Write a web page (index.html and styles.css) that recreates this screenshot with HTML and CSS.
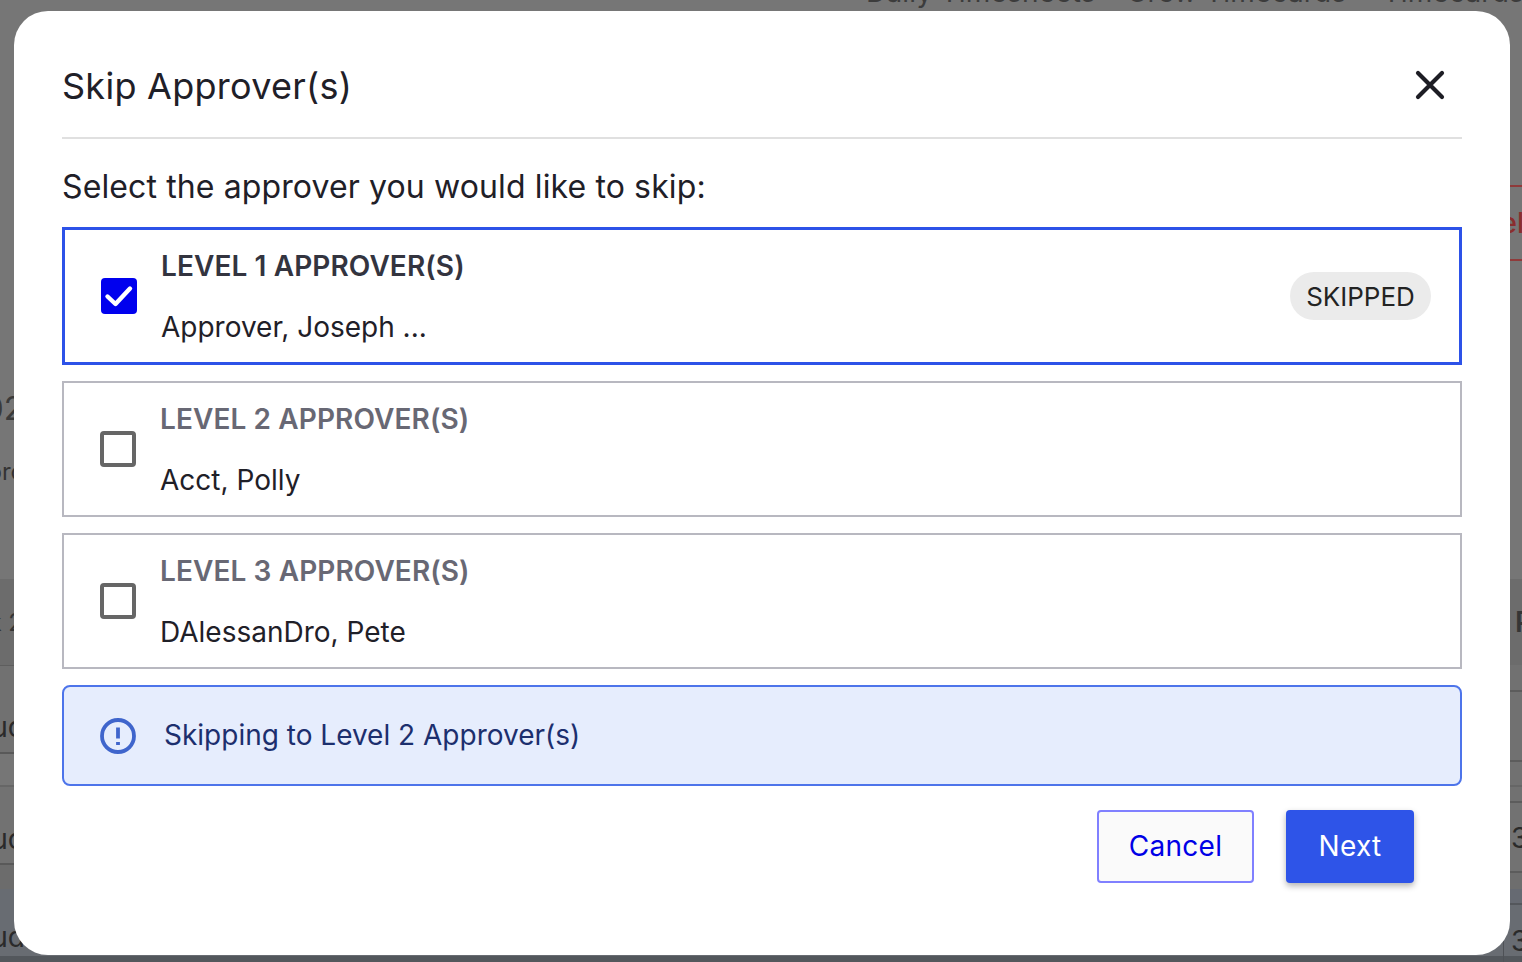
FILE: index.html
```html
<!DOCTYPE html>
<html lang="en">
<head>
<meta charset="utf-8">
<title>Skip Approver(s)</title>
<link rel="stylesheet" href="styles.css">
</head>
<body>
<div class="page">
  <div class="backdrop">
    <nav class="bg-nav"><span>Daily Timesheets</span><span>Crew Timecards</span><span class="bg-nav-last">Timecards</span></nav>
    <div class="bg-banner"><span class="bg-alert">Cancel</span></div>
    <div class="bg-hero"><span class="bg-num">202</span></div>
    <div class="bg-sub"><span>Approver</span></div>
    <div class="bg-head"><span class="bg-l">Week 2</span><span class="bg-r">Pay</span></div>
    <div class="bg-row bg-r1"><span class="bg-l">Studio</span></div>
    <div class="bg-row bg-r2"></div>
    <div class="bg-row bg-r3"><span class="bg-l">Studio</span></div>
    <div class="bg-row bg-r4"></div>
    <div class="bg-foot"><span class="bg-l">Studio</span></div>
  </div>

  <div class="bg-edge">
    <div class="edge-row edge-a"></div>
    <div class="edge-row edge-b"></div>
    <div class="edge-row edge-c"></div>
    <div class="edge-row edge-d"></div>
    <div class="edge-row edge-e">3</div>
    <div class="edge-row edge-f"></div>
    <div class="edge-row edge-g"></div>
    <div class="edge-row edge-h">3</div>
  </div>

  <section class="modal">
    <header class="modal-head">
      <h1 class="modal-title">Skip Approver(s)</h1>
      <svg class="close" viewBox="0 0 30 30" aria-label="Close"><path d="M3 3 L27 27 M27 3 L3 27"/></svg>
    </header>

    <p class="prompt">Select the approver you would like to skip:</p>

    <div class="levels">
      <div class="level level-active">
        <span class="check check-on">
          <svg viewBox="0 0 36 36"><path d="M6.5 18.5 L14.5 26 L29 10.5"/></svg>
        </span>
        <div class="level-text">
          <div class="level-title level-title-dark">LEVEL 1 APPROVER(S)</div>
          <div class="level-name">Approver, Joseph ...</div>
        </div>
        <span class="pill">SKIPPED</span>
      </div>

      <div class="level">
        <span class="check"></span>
        <div class="level-text">
          <div class="level-title">LEVEL 2 APPROVER(S)</div>
          <div class="level-name">Acct, Polly</div>
        </div>
      </div>

      <div class="level">
        <span class="check"></span>
        <div class="level-text">
          <div class="level-title">LEVEL 3 APPROVER(S)</div>
          <div class="level-name">DAlessanDro, Pete</div>
        </div>
      </div>

      <div class="info">
        <svg class="info-icon" viewBox="0 0 36 36"><circle cx="18" cy="18" r="16"/><path d="M18 9.5 V20.5"/><path d="M18 24 V27"/></svg>
        <span class="info-text">Skipping to Level 2 Approver(s)</span>
      </div>
    </div>

    <div class="actions">
      <button class="btn btn-cancel">Cancel</button>
      <button class="btn btn-next">Next</button>
    </div>
  </section>
</div>
</body>
</html>
```

FILE: styles.css
```css
* { box-sizing: border-box; }

html, body {
  margin: 0;
  padding: 0;
  height: 100%;
  overflow: hidden;
}

body {
  font-family: "Inter", "Liberation Sans", sans-serif;
  color: #1f2028;
}

.page {
  position: relative;
  width: 1522px;
  height: 962px;
  overflow: hidden;
  background: #767676;
}

/* Dimmed page behind the dialog */
.backdrop {
  display: flex;
  flex-direction: column;
  height: 962px;
  color: #2e2e2e;
}

.bg-nav {
  display: flex;
  justify-content: flex-start;
  align-items: flex-end;
  gap: 31px;
  height: 11px;
  padding: 0 0 2px 866px;
  font-size: 28px;
  line-height: 34px;
  letter-spacing: 0.2px;
  color: #3c3c3c;
  white-space: nowrap;
}

.bg-nav-last { margin-left: 5px; }

.bg-banner {
  display: flex;
  justify-content: flex-end;
  margin-top: 174px;
  height: 76px;
}

.bg-alert {
  width: 74px;
  margin-right: -60px;
  border-top: 2px solid #8f3a3a;
  border-bottom: 2px solid #8f3a3a;
  color: #8a2e2e;
  font-size: 28px;
  font-weight: 500;
  line-height: 72px;
  text-indent: -77px;
  overflow: hidden;
}

.bg-hero {
  height: 90px;
  margin-top: 130px;
  font-size: 32px;
  line-height: 36px;
  color: #3a3a3a;
}

.bg-num { display: block; margin-left: -36px; }

.bg-sub {
  height: 0;
  margin-top: -22px;
  margin-left: -44px;
  font-size: 24px;
  line-height: 26px;
  color: #333;
}

.bg-head {
  display: flex;
  justify-content: space-between;
  align-items: center;
  height: 87px;
  margin-top: 120px;
  background: #6c6c6c;
  border-bottom: 1px solid #5e5e5e;
  font-size: 24px;
  color: #353535;
}

.bg-row,
.bg-foot {
  display: flex;
  align-items: flex-end;
  font-size: 28px;
  line-height: 34px;
  color: #2a2a2a;
  border-bottom: 2px solid #595959;
}

.bg-l { margin-left: -36px; }
.bg-r { margin-right: -7px; }
.bg-head .bg-l { margin-left: -62px; }
.bg-head .bg-r { width: 7px; margin-right: 0; overflow: hidden; font-size: 28px; font-weight: 600; }

.bg-r1 { height: 88px; padding-bottom: 8px; background: #717171; }
.bg-r2 { height: 33px; background: #767676; border-bottom-color: #666; }
.bg-r3 { height: 78px; padding-bottom: 7px; background: #727272; }
.bg-r4 { height: 24px; background: #6c6c6c; border-bottom: 0; }

.bg-foot {
  flex: 1;
  align-items: flex-start;
  padding-top: 31px;
  border-bottom: 0;
  background: linear-gradient(#686c72 0 67px, #53575c 67px);
}

/* Table column that shows past the dialog's right edge */
.bg-edge {
  position: absolute;
  left: 1503px;
  top: 665px;
  width: 19px;
  height: 297px;
  display: flex;
  flex-direction: column;
  font-size: 28px;
  line-height: 34px;
  color: #2a2a2a;
  white-space: nowrap;
  overflow: hidden;
}

.edge-row {
  flex: none;
  padding-left: 8px;
  background: #717171;
  border-bottom: 2px solid #5c5c5c;
}

.edge-a { height: 27px; }
.edge-b { height: 70px; }
.edge-c { height: 25px; border-bottom-color: #666; }
.edge-d { height: 16px; }
.edge-e { height: 70px; padding-top: 18px; background: #727272; }
.edge-f { height: 16px; border-bottom: 0; background: #6e6e6e; }
.edge-g { height: 16px; background: #666a72; border-bottom-color: #54575c; }
.edge-h {
  height: 57px;
  padding-top: 19px;
  border-bottom: 0;
  border-left: 1px solid #4e5156;
  padding-left: 7px;
  background: linear-gradient(#686c72 0 51px, #53575c 51px);
}

/* Dialog */
.modal {
  position: absolute;
  left: 14px;
  top: 11px;
  width: 1496px;
  height: 944px;
  padding: 0 48px;
  background: #fff;
  border-radius: 34px;
}

.modal-head {
  display: flex;
  justify-content: space-between;
  align-items: center;
  height: 128px;
  padding: 24px 17px 0 0;
  border-bottom: 2px solid #e0e0e0;
}

.modal-title {
  margin: 0;
  font-size: 36px;
  font-weight: 400;
  line-height: 42px;
  letter-spacing: 0.27px;
  color: #1f2028;
}

.close {
  width: 30px;
  height: 30px;
  margin-top: -2px;
  fill: none;
  stroke: #1d1d24;
  stroke-width: 4.2;
  stroke-linecap: round;
}

.prompt {
  margin: 30px 0 22px;
  font-size: 32px;
  line-height: 36px;
  letter-spacing: 0.12px;
  color: #1f2028;
}

.levels {
  display: flex;
  flex-direction: column;
  gap: 16px;
}

.level {
  display: flex;
  align-items: center;
  gap: 24px;
  padding: 0 28px 0 36px;
  border: 2px solid #b8b8c0;
}

.level-active {
  border: 3px solid #2d52e8;
}

.check {
  flex: none;
  width: 36px;
  height: 36px;
  border: 4px solid #666;
  border-radius: 4px;
  background: #fff;
}

.check-on {
  border: 0;
  background: #0000ee;
}

.check-on svg {
  display: block;
  width: 36px;
  height: 36px;
  fill: none;
  stroke: #fff;
  stroke-width: 4.4;
  stroke-linecap: round;
  stroke-linejoin: round;
}

.level-text {
  flex: 1;
  display: flex;
  flex-direction: column;
  gap: 25px;
  padding: 18px 0 17px;
}

.level-title {
  font-size: 28px;
  font-weight: 600;
  line-height: 36px;
  letter-spacing: 0.1px;
  color: #686874;
}

.level-title-dark {
  color: #33343f;
}

.level-name {
  font-size: 28px;
  line-height: 36px;
  color: #1f2028;
}

.pill {
  flex: none;
  width: 141px;
  height: 48px;
  border-radius: 24px;
  background: #ebebeb;
  color: #232323;
  font-size: 26px;
  line-height: 50px;
  text-align: center;
}

.info {
  display: flex;
  align-items: center;
  gap: 28px;
  height: 101px;
  padding-left: 36px;
  padding-bottom: 2px;
  background: #e6edfd;
  border: 2px solid #4d74ea;
  border-radius: 8px;
}

.info-icon {
  flex: none;
  width: 36px;
  height: 36px;
  margin-top: 2px;
  fill: none;
  stroke: #3f65cc;
  stroke-width: 3.8;
}

.info-text {
  font-size: 28px;
  color: #1c2f6e;
}

.actions {
  display: flex;
  justify-content: flex-end;
  gap: 32px;
  margin-top: 24px;
  padding-right: 48px;
}

.btn {
  height: 73px;
  padding-bottom: 3px;
  font-family: inherit;
  font-size: 28px;
  letter-spacing: 0.3px;
  border-radius: 4px;
}

.btn-cancel {
  width: 157px;
  background: #fafafa;
  border: 2px solid #8080ff;
  color: #0000e6;
}

.btn-next {
  width: 128px;
  background: #2e54e8;
  border: 0;
  color: #fff;
  box-shadow: 0 3px 6px rgba(0, 0, 0, 0.3);
}
```
